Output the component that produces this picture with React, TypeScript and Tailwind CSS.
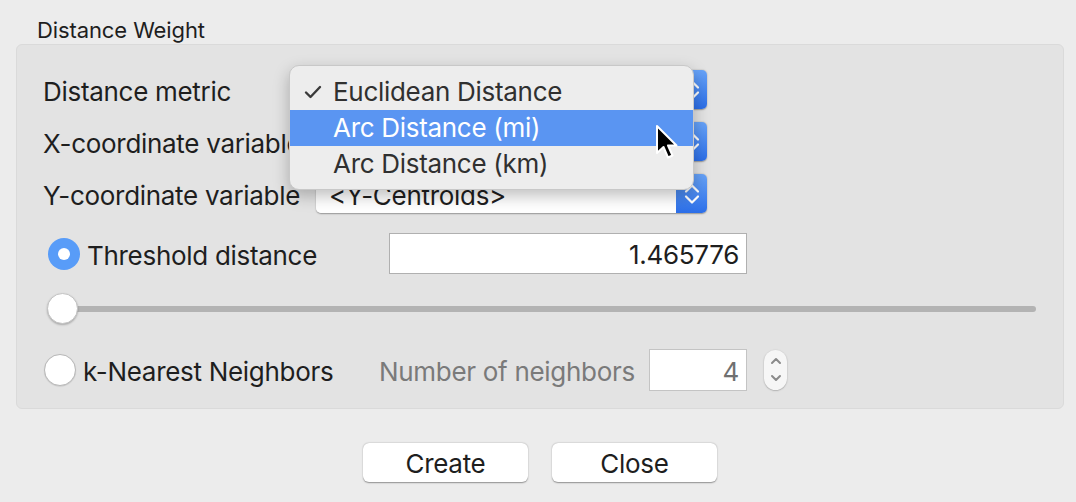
import React from 'react';

function PopupChevrons() {
  return (
    <svg width="18" height="36" viewBox="0 0 18 36" fill="none">
      <path d="M3 15.5 L9 9.5 L15 15.5" stroke="white" strokeWidth="2.2" strokeLinecap="round" strokeLinejoin="round" />
      <path d="M3 20.5 L9 26.5 L15 20.5" stroke="white" strokeWidth="2.2" strokeLinecap="round" strokeLinejoin="round" />
    </svg>
  );
}

function StepperChevrons() {
  return (
    <svg width="12" height="40" viewBox="0 0 12 40" fill="none">
      <path d="M2 13 L6 9 L10 13" stroke="#8a8a8a" strokeWidth="2" strokeLinecap="round" strokeLinejoin="round" />
      <path d="M2 26 L6 30 L10 26" stroke="#8a8a8a" strokeWidth="2" strokeLinecap="round" strokeLinejoin="round" />
    </svg>
  );
}

function Popup({ value }: { value: string }) {
  return (
    <div className="flex h-[39px] w-[391px] rounded-[5px] shadow-[0_0.5px_1.5px_rgba(0,0,0,0.35)]">
      <div className="flex flex-1 items-center rounded-l-[5px] bg-white pl-[13px] pt-[4px] text-[26px] leading-none tracking-[-0.3px]">
        {value}
      </div>
      <div className="flex w-[31px] items-center justify-center rounded-r-[5px] bg-gradient-to-b from-[#67a3f8] to-[#2c6ee8]">
        <PopupChevrons />
      </div>
    </div>
  );
}

function Radio({ on }: { on: boolean }) {
  return on ? (
    <div className="flex h-[32px] w-[32px] items-center justify-center rounded-full bg-[#589cf8]">
      <div className="h-[12px] w-[12px] rounded-full bg-white" />
    </div>
  ) : (
    <div className="h-[32px] w-[32px] rounded-full border border-[#b8b8b8] bg-white shadow-[0_0.5px_1px_rgba(0,0,0,0.15)]" />
  );
}

export default function App() {
  return (
    <div className="relative h-[502px] w-[1076px] overflow-hidden bg-[#ececec] font-['Inter','Liberation_Sans',sans-serif] text-[#1e1e1e]">
      <div className="h-[44px] pl-[37px] pt-[18px] text-[22px] leading-[24px] tracking-[-0.1px]">Distance Weight</div>

      <div className="ml-[16px] flex h-[365px] w-[1048px] flex-col rounded-[6px] border border-[#dadada] bg-[#e3e3e3] pt-[25px] text-[26px] leading-none tracking-[-0.3px]">
        <div className="flex h-[39px] items-center">
          <div className="w-[299px] pl-[26px] pt-[5px] whitespace-nowrap">Distance metric</div>
          <Popup value="" />
        </div>
        <div className="mt-[13px] flex h-[39px] items-center">
          <div className="w-[299px] pl-[26px] pt-[5px] whitespace-nowrap">X-coordinate variable</div>
          <Popup value="" />
        </div>
        <div className="mt-[13px] flex h-[39px] items-center">
          <div className="w-[299px] pl-[26px] pt-[5px] whitespace-nowrap">Y-coordinate variable</div>
          <Popup value="<Y-Centroids>" />
        </div>

        <div className="mt-[20px] flex h-[41px] items-center">
          <div className="flex w-[372px] items-center pl-[31px]">
            <Radio on />
            <span className="ml-[7px] pt-[4px]">Threshold distance</span>
          </div>
          <div className="flex h-[41px] w-[358px] items-center justify-end border border-[#b0b0b0] bg-white pr-[7px] pt-[3px]">
            1.465776
          </div>
        </div>

        <div className="relative mt-[19px] ml-[30px] flex h-[31px] w-[989px] items-center">
          <div className="h-[6px] w-full rounded-full bg-[#b3b3b3]" />
          <div className="absolute left-0 top-0 h-[31px] w-[31px] rounded-full border border-[#c4c4c4] bg-white shadow-[0_1px_2px_rgba(0,0,0,0.25)]" />
        </div>

        <div className="mt-[25px] flex h-[42px] items-center">
          <div className="flex w-[362px] items-center pl-[27px]">
            <Radio on={false} />
            <span className="ml-[7px] pt-[4px] whitespace-nowrap">k-Nearest Neighbors</span>
          </div>
          <div className="w-[270px] pt-[4px] text-[#7a7a7a] whitespace-nowrap">Number of neighbors</div>
          <div className="flex h-[42px] w-[98px] items-center justify-end border border-[#c4c4c4] bg-white pr-[7px] pt-[3px] text-[#707070]">
            4
          </div>
          <div className="ml-[17px] flex h-[40px] w-[23px] items-center justify-center rounded-full bg-[#f6f6f6] shadow-[0_0.5px_1.5px_rgba(0,0,0,0.35)]">
            <StepperChevrons />
          </div>
        </div>
      </div>

      <div className="mt-[34px] flex justify-center gap-[24px] pl-[4px] text-[26px] leading-none tracking-[-0.3px]">
        <div className="flex h-[39px] w-[165px] items-center justify-center rounded-[6px] bg-white pt-[2px] shadow-[0_0.5px_1.5px_rgba(0,0,0,0.4)]">
          Create
        </div>
        <div className="flex h-[39px] w-[165px] items-center justify-center rounded-[6px] bg-white pt-[2px] shadow-[0_0.5px_1.5px_rgba(0,0,0,0.4)]">
          Close
        </div>
      </div>

      {/* open popup menu */}
      <div className="absolute left-[289px] top-[65px] flex h-[125px] w-[405px] flex-col rounded-[10px] border border-[#c8c8c8] bg-[#ededed] pt-[8px] text-[26px] leading-none tracking-[-0.3px] text-[#303030] shadow-[0_6px_16px_rgba(0,0,0,0.25)]">
        <div className="relative flex h-[36px] items-center pl-[43px]">
          <svg className="absolute left-[14px] top-[11px]" width="18" height="14" viewBox="0 0 18 14" fill="none">
            <path d="M2 7.5 L6.5 12 L16 2" stroke="#3a3a3a" strokeWidth="2.4" strokeLinecap="round" strokeLinejoin="round" />
          </svg>
          Euclidean Distance
        </div>
        <div className="flex h-[36px] items-center bg-[#5a95f2] pl-[43px] text-white">Arc Distance (mi)</div>
        <div className="flex h-[36px] items-center pl-[43px]">Arc Distance (km)</div>
      </div>

      {/* mouse cursor */}
      <svg className="absolute left-[654px] top-[124px]" width="26" height="38" viewBox="0 0 26 38">
        <path d="M3 2 L3 29 L9.5 23 L14 33.5 L18.5 31.5 L14 21.5 L22.5 21.5 Z" fill="black" stroke="white" strokeWidth="2" strokeLinejoin="round" />
      </svg>
    </div>
  );
}
